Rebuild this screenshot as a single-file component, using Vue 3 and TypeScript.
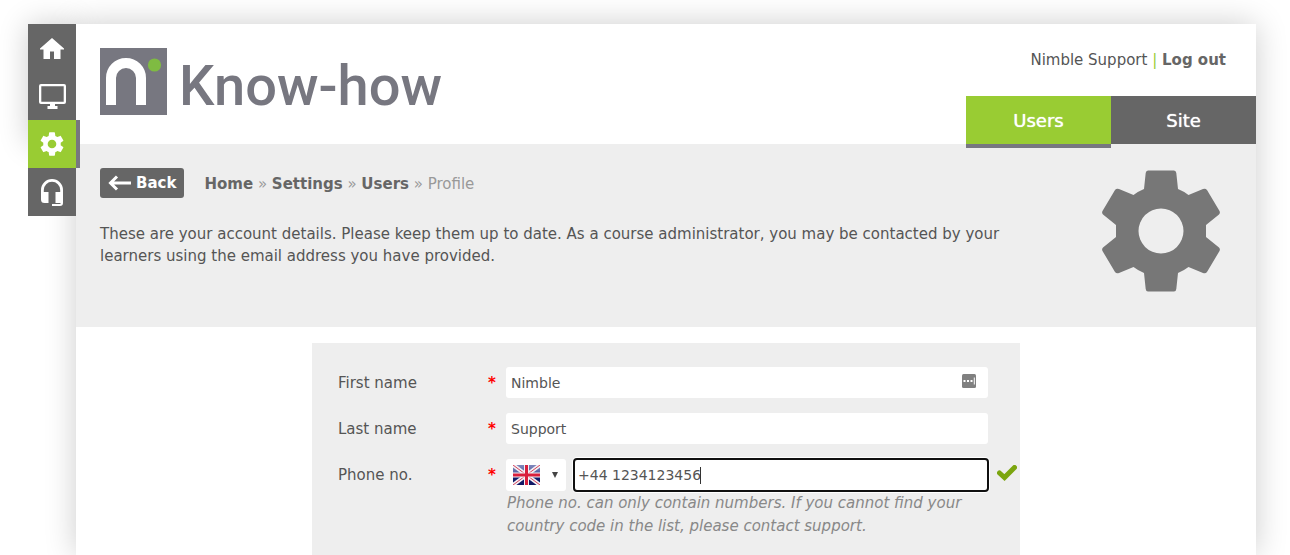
<script setup lang="ts">
import { ref } from 'vue'

const firstName = ref('Nimble')
const lastName = ref('Support')
const phone = ref('+44 1234123456')
const country = ref('gb')

const crumbs = ['Home', 'Settings', 'Users']
</script>

<template>
  <div class="shell">
    <nav class="rail" aria-label="Main">
      <a href="#home" aria-label="Home">
        <svg width="24" height="21" viewBox="0 0 24 21"><path d="M12 0L24 10.500V11.500H20.500V21H14V13.500H10V21H3.500V11.500H0V10.500Z" /></svg>
      </a>
      <a href="#courses" aria-label="Courses">
        <svg width="27" height="25" viewBox="0 0 27 25"><path fill-rule="evenodd" d="M2 0H25A2 2 0 0 1 27 2V18A2 2 0 0 1 25 20H16V22H18.500V25H8.500V22H11V20H2A2 2 0 0 1 0 18V2A2 2 0 0 1 2 0ZM2.300 2.300V17.700H24.700V2.300Z" /></svg>
      </a>
      <a href="#settings" class="active" aria-label="Settings" aria-current="page">
        <svg width="28" height="28" viewBox="0 0 24 24"><path fill-rule="evenodd" d="M19.430 12.980c.04-.32.07-.64.07-.98s-.03-.66-.07-.98l2.110-1.650c.19-.15.24-.42.12-.64l-2-3.460c-.12-.22-.39-.3-.61-.22l-2.490 1c-.52-.4-1.080-.73-1.690-.98l-.38-2.650C14.460 2.180 14.250 2 14 2h-4c-.25 0-.46.18-.49.42l-.38 2.650c-.61.25-1.170.59-1.690.98l-2.490-1c-.23-.09-.49 0-.61.22l-2 3.460c-.13.22-.07.49.12.64l2.110 1.650c-.04.32-.07.65-.07.98s.03.66.07.98l-2.110 1.650c-.19.15-.24.42-.12.64l2 3.460c.12.22.39.3.61.22l2.490-1c.52.4 1.080.73 1.690.98l.38 2.650c.03.24.24.42.49.42h4c.25 0 .46-.18.49-.42l.38-2.650c.61-.25 1.170-.59 1.690-.98l2.490 1c.23.09.49 0 .61-.22l2-3.460c.12-.22.07-.49-.12-.64zM12 15.700A3.700 3.700 0 1 1 12 8.300A3.700 3.700 0 0 1 12 15.700Z" /></svg>
      </a>
      <a href="#support" aria-label="Support">
        <svg width="22" height="27" viewBox="0 0 22 27"><path d="M11 0A11 11 0 0 0 0 11V20.500A3.500 3.500 0 0 0 3.500 24H7.500V13H2.800V11A8.200 8.200 0 0 1 19.200 11V13H14.500V24H19.500V25H11V27H19A3 3 0 0 0 22 24V11A11 11 0 0 0 11 0Z" /></svg>
      </a>
    </nav>

    <div class="page">
      <header class="top">
        <a class="brand" href="#home">
          <svg width="67" height="67" viewBox="0 0 67 67" aria-hidden="true">
            <rect width="67" height="67" fill="#777780" />
            <path d="M11 57V30A15 15 0 0 1 41 30V57" fill="none" stroke="#fff" stroke-width="10" />
            <circle cx="54.500" cy="17" r="6.600" fill="#7fbb42" />
          </svg>
          <span>Know-how</span>
        </a>
        <div class="right">
          <p class="account">Nimble Support <span class="bar">|</span> <a href="#logout">Log out</a></p>
          <nav class="tabs" aria-label="Sections">
            <a href="#users" class="current">Users</a>
            <a href="#site">Site</a>
          </nav>
        </div>
      </header>

      <section class="intro">
        <div class="copy">
          <div class="trail">
            <button type="button" class="back">
              <svg width="24" height="16" viewBox="0 0 24 16" aria-hidden="true"><path d="M23 8H3M9 1.500L2.500 8L9 14.500" /></svg>
              Back
            </button>
            <nav class="crumbs" aria-label="Breadcrumb">
              <template v-for="crumb in crumbs" :key="crumb"><a :href="'#' + crumb.toLowerCase()">{{ crumb }}</a> » </template>
              <span>Profile</span>
            </nav>
          </div>
          <p>These are your account details. Please keep them up to date. As a course administrator, you may be contacted by your learners using the email address you have provided.</p>
        </div>
        <svg class="gear" width="120" height="122" viewBox="-60 -61 120 122" aria-hidden="true">
          <path fill-rule="evenodd" d="M-13-60.500H13Q15-60.500 15.300-58L17-42A45 45 0 0 1 27.500-36L42-42Q44.500-43 46-41L58.500-20Q59.500-18 58-16.500L45-6V6L58 16.500Q59.500 18 58.500 20L46 41Q44.500 43 42 42L27.500 36A45 45 0 0 1 17 42L15.300 58Q15 60.500 13 60.500H-13Q-15 60.500-15.300 58L-17 42A45 45 0 0 1-27.500 36L-42 42Q-44.500 43-46 41L-58.500 20Q-59.500 18-58 16.500L-45 6V-6L-58-16.500Q-59.500-18-58.500-20L-46-41Q-44.500-43-42-42L-27.500-36A45 45 0 0 1-17-42L-15.300-58Q-15-60.500-13-60.500ZM0-22.500A22.500 22.500 0 1 0 0 22.500A22.500 22.500 0 1 0 0-22.500Z" />
        </svg>
      </section>

      <form class="profile" @submit.prevent>
        <div class="row">
          <label for="first">First name</label>
          <span class="star">*</span>
          <div class="field">
            <input id="first" v-model="firstName" type="text" required />
            <svg class="dots" width="14" height="14" viewBox="0 0 14 14" aria-hidden="true">
              <rect width="14" height="14" rx="1.500" fill="#808080" />
              <path d="M1.500 6h2v2h-2zM5 6h2v2H5zM8.500 6h2v2h-2zM11.800 3.500h1v7h-1z" fill="#fff" />
            </svg>
          </div>
        </div>
        <div class="row">
          <label for="last">Last name</label>
          <span class="star">*</span>
          <div class="field"><input id="last" v-model="lastName" type="text" required /></div>
        </div>
        <div class="row">
          <label for="phone">Phone no.</label>
          <span class="star">*</span>
          <div class="field phone">
            <div class="country">
              <svg width="27" height="20" viewBox="0 0 27 20" aria-hidden="true">
                <defs>
                  <linearGradient id="navy" x1="0" y1="0" x2="0" y2="1">
                    <stop offset="0" stop-color="#8088bd" /><stop offset=".5" stop-color="#4b559a" />
                    <stop offset=".5" stop-color="#14206f" /><stop offset="1" stop-color="#101663" />
                  </linearGradient>
                </defs>
                <rect width="27" height="20" fill="url(#navy)" />
                <path d="M0 0L27 20M27 0L0 20" stroke="#f2f2f6" stroke-width="4" />
                <path d="M0 0L27 20M27 0L0 20" stroke="#d8405a" stroke-width="1" />
                <path d="M13.500 0V20M0 10H27" stroke="#f2f2f6" stroke-width="5" />
                <path d="M13.500 0V20M0 10H27" stroke="#d91f3c" stroke-width="3" />
              </svg>
              <svg width="6" height="6" viewBox="0 0 6 6" aria-hidden="true"><path d="M0 0H6L3 6Z" fill="#444" /></svg>
              <select v-model="country" aria-label="Country code">
                <option value="gb">UK</option>
              </select>
            </div>
            <div class="number">
              <input id="phone" v-model="phone" type="tel" required />
              <i class="caret"></i>
            </div>
            <svg class="tick" width="20" height="16" viewBox="0 0 20 16" aria-hidden="true"><path d="M2.500 8L7.500 12.500L17.500 2.500" /></svg>
          </div>
        </div>
        <p class="help">Phone no. can only contain numbers. If you cannot find your country code in the list, please contact support.</p>
      </form>
    </div>
  </div>
</template>

<style>
body {
  margin: 0;
  background: #fff;
}
</style>

<style scoped>
* {
  box-sizing: border-box;
}

.shell {
  display: flex;
  align-items: flex-start;
  isolation: isolate;
  padding: 24px 34px 0 28px;
  font: 15px/22px Verdana, "DejaVu Sans", sans-serif;
  color: #555;
}

p {
  margin: 0;
}

a {
  color: #666;
  font-weight: bold;
  text-decoration: none;
}

.rail {
  position: relative;
  flex: none;
  width: 48px;
}

.rail::before {
  content: "";
  position: absolute;
  inset: 0 0 72px;
  z-index: -1;
  box-shadow: 0 0 30px rgba(0, 0, 0, 0.2);
}

.rail a {
  display: grid;
  place-items: center;
  height: 48px;
  background: #666;
}

.rail svg {
  fill: #fff;
}

.rail .active {
  background: #9c3;
  box-shadow: 4px 0 #777780;
}

.page {
  display: flex;
  flex-direction: column;
  flex: 1;
  min-width: 0;
  min-height: calc(100vh - 24px);
  background: #fff;
  box-shadow: 0 0 30px rgba(0, 0, 0, 0.2);
}

.top {
  display: flex;
  justify-content: space-between;
  height: 120px;
}

.brand {
  display: flex;
  gap: 12px;
  padding: 24px;
  font: 500 56px/76px Roboto, sans-serif;
  color: #777780;
}

.right {
  display: flex;
  flex-direction: column;
  justify-content: space-between;
}

.account {
  padding: 25px 30px 0 0;
  text-align: right;
}

.bar {
  color: #9c3;
}

.tabs {
  position: relative;
  display: flex;
  justify-content: flex-end;
}

.tabs a {
  width: 145px;
  height: 48px;
  background: #666;
  color: #fff;
  font-size: 18px;
  font-weight: normal;
  line-height: 50px;
  text-align: center;
  text-shadow: 0 0 1px #fff;
}

.tabs .current {
  background: #9c3;
  box-shadow: 0 4px #777780;
}

.intro {
  display: flex;
  justify-content: space-between;
  padding: 24px 35px 35px 24px;
  background: #eee;
}

.copy {
  max-width: 920px;
}

.trail {
  display: flex;
  align-items: center;
  gap: 20px;
  margin-bottom: 25px;
}

.back {
  display: flex;
  align-items: center;
  gap: 4px;
  height: 30px;
  padding: 0 8px;
  border: 0;
  border-radius: 3px;
  background: #666;
  color: #fff;
  font: bold 15px/30px "DejaVu Sans", sans-serif;
}

.back path {
  fill: none;
  stroke: #fff;
  stroke-width: 3;
}

.crumbs {
  color: #999;
  line-height: 30px;
  padding-top: 1px;
  margin-bottom: -1px;
}

.gear {
  flex: none;
  margin-top: 2px;
  fill: #777;
}

.profile {
  flex: 1;
  width: 60%;
  margin: 16px auto 0;
  padding: 24px 32px 0 26px;
  background: #eee;
}

.row {
  display: flex;
  margin-bottom: 15px;
  line-height: 32px;
}

.row label {
  width: 150px;
}

.star {
  width: 18px;
  color: #f00;
  font-weight: bold;
}

.field {
  position: relative;
  display: flex;
  flex: 1;
  gap: 8px;
  height: 31px;
}

.row {
  height: 31px;
}

input {
  width: 100%;
  height: 31px;
  padding: 0 5px;
  border: 0;
  border-radius: 3px;
  background: #fff;
  color: #555;
  font: 14px "DejaVu Sans", sans-serif;
}

.dots {
  position: absolute;
  top: 7px;
  right: 12px;
}

.phone {
  height: 32px;
}

.country {
  position: relative;
  display: flex;
  align-items: center;
  gap: 12px;
  width: 60px;
  padding-left: 7px;
  border-radius: 3px;
  background: #fff;
}

.country select {
  position: absolute;
  inset: 0;
  width: 100%;
  border: 0;
  appearance: none;
  background: none;
  color: transparent;
}

.number {
  position: relative;
  flex: 1;
}

.number input {
  display: block;
  height: 32px;
  padding: 0 4px;
  outline: 2px solid #101010;
  outline-offset: -1px;
  box-shadow: 0 0 0 2px #fff;
}

.caret {
  position: absolute;
  top: 8px;
  left: 126px;
  width: 1px;
  height: 17px;
  background: #333;
}

.tick {
  position: absolute;
  top: 6px;
  right: -29px;
  fill: none;
  stroke: #7ba50f;
  stroke-width: 5;
  stroke-linecap: round;
}

.help {
  margin: -13px 0 0 169px;
  color: #888;
  font-style: italic;
  line-height: 23px;
}
</style>
